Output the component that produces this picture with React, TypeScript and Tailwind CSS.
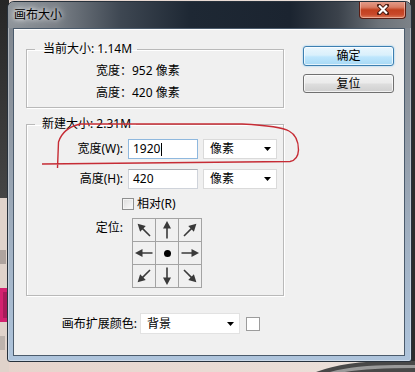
import React from "react";

const FONT = "font-['Noto_Sans','Noto_Sans_CJK_SC',sans-serif]";

function Arrow({ angle }: { angle: number }) {
  return (
    <svg width="22" height="22" viewBox="0 0 22 22">
      <g transform={`rotate(${angle} 11 11)`}>
        <line x1="11" y1="19.5" x2="11" y2="8" stroke="#3a3a3a" strokeWidth="1.6" />
        <polygon points="11,2 7,9.5 15,9.5" fill="#3a3a3a" />
      </g>
    </svg>
  );
}

function Cell({ children }: { children?: React.ReactNode }) {
  return <div className="flex h-[22px] w-[22px] items-center justify-center bg-[#f0f0f0]">{children}</div>;
}

function Caret() {
  return (
    <svg width="7" height="4" viewBox="0 0 7 4">
      <polygon points="0,0 7,0 3.5,4" fill="#000" />
    </svg>
  );
}

function Wallpaper() {
  return (
    <svg className="absolute inset-0" width="415" height="372" viewBox="0 0 415 372">
      <defs>
        <linearGradient id="leftdark" x1="0" y1="0" x2="0" y2="1">
          <stop offset="0" stopColor="#262626" />
          <stop offset="1" stopColor="#454545" />
        </linearGradient>
        <linearGradient id="bottom" x1="0" y1="0" x2="1" y2="0">
          <stop offset="0" stopColor="#e6d4cc" />
          <stop offset="1" stopColor="#ece2dc" />
        </linearGradient>
      </defs>
      <rect x="0" y="0" width="415" height="372" fill="url(#bottom)" />
      <rect x="0" y="0" width="9" height="198" fill="url(#leftdark)" />
      <rect x="0" y="198" width="9" height="174" fill="#e0d3cb" />
      <rect x="0" y="250" width="6" height="14" fill="#8c8480" opacity="0.6" />
      <rect x="0" y="288" width="7" height="34" fill="#d3226f" />
      <rect x="3" y="292" width="4" height="26" fill="#a81b5a" />
      <rect x="0" y="336" width="5" height="14" fill="#9a9490" opacity="0.5" />
      <rect x="410" y="0" width="5" height="372" fill="#2c2c2c" />
      <path d="M316,372 Q345,361 392,361 L415,361 L415,372 Z" fill="#484848" />
      <path d="M330,372 Q355,365 395,365 L415,365 L415,368 Q370,368 345,372 Z" fill="#9a9a9a" />
    </svg>
  );
}

function Annotation() {
  return (
    <svg className="pointer-events-none absolute inset-0" width="415" height="372" viewBox="0 0 415 372">
      <path
        d="M42,164 L290,161.5 Q298,160 298.5,150 Q298.5,136 289,131 Q281,126 242,124 L80,124 Q63,128 58.5,142 L57.5,168"
        fill="none"
        stroke="#c62c35"
        strokeWidth="1.4"
      />
    </svg>
  );
}

export default function App() {
  return (
    <div className={`relative h-[372px] w-[415px] overflow-hidden text-[12px] text-black ${FONT}`}>
      <Wallpaper />
      <div className="relative ml-[7px] pt-[1px]">
        <div className="flex h-[361px] w-[405px] flex-col overflow-hidden rounded-t-[7px] rounded-b-[3px] border border-[#27313c] bg-[linear-gradient(180deg,#7d848c_0%,#8d959f_30%,#a3b3c5_70%,#aec4dc_100%)] shadow-[inset_0_0_0_1px_rgba(255,255,255,0.35)]">
          {/* title bar */}
          <div className="flex h-[26px] shrink-0 items-start justify-between bg-[linear-gradient(90deg,#8f959b_0%,#7a8087_12%,#3e4752_28%,#1e2834_45%,#1b2430_70%,#3b424b_82%,#6c7279_92%,#7d8288_100%)] pl-[6px] pr-[5px]">
            <div className="pt-[6px] leading-[14px] text-black [text-shadow:0_0_5px_#fff,0_0_8px_rgba(255,255,255,0.9)]">
              画布大小
            </div>
            <div className="-mt-[2px] flex h-[19px] w-[47px] items-center justify-center rounded-b-[4px] border border-t-0 border-[#5a1c12] bg-[linear-gradient(180deg,#e6a797_0%,#d97c63_40%,#c2401f_55%,#c8482a_80%,#da7a58_100%)] shadow-[inset_0_0_0_1px_rgba(255,220,210,0.5)]">
              <svg width="12" height="11" viewBox="0 0 12 11">
                <path d="M2,1.5 L10,9.5 M10,1.5 L2,9.5" stroke="#4a1a10" strokeWidth="4" strokeLinecap="square" />
                <path d="M2,1.5 L10,9.5 M10,1.5 L2,9.5" stroke="#fff" strokeWidth="2.2" />
              </svg>
            </div>
          </div>
          {/* client area */}
          <div className="mb-[5px] ml-[5px] mr-[6px] flex flex-1 border border-[#4b5b6c] bg-[#f0f0f0] shadow-[inset_0_1px_0_#fff]">
            {/* left column */}
            <div className="flex w-[270px] flex-col pl-[12px] pt-[13px]">
              <fieldset className="w-[258px] border border-[#b9b9b9] pb-[3px] shadow-[1px_1px_0_#fff,inset_1px_1px_0_#fff]">
                <legend className="ml-[8px] pl-[8px] pr-[5px] leading-[14px]">当前大小: 1.14M</legend>
                <div className="flex flex-col pl-[69px] pt-[4px] leading-[22px]">
                  <div>宽度：952 像素</div>
                  <div>高度：420 像素</div>
                </div>
              </fieldset>

              <fieldset className="mt-[9px] w-[258px] border border-[#b9b9b9] pb-[7px] shadow-[1px_1px_0_#fff,inset_1px_1px_0_#fff]">
                <legend className="ml-[8px] pl-[7px] pr-[5px] leading-[14px]">新建大小: 2.31M</legend>
                <div className="flex flex-col pt-[8px]">
                  <div className="flex h-[20px] items-center">
                    <div className="w-[97px] pr-px text-right leading-[14px]">宽度(W):</div>
                    <div className="ml-[4px] flex h-[20px] w-[70px] items-center border border-[#8fb8de] bg-white pl-[4px] leading-[14px]">
                      1920
                      <span className="ml-[1px] inline-block h-[13px] w-px bg-black" />
                    </div>
                    <div className="ml-[5px] flex h-[20px] w-[74px] items-center justify-between border border-[#dadada] bg-white pl-[6px] pr-[5px] leading-[14px]">
                      <span>像素</span>
                      <Caret />
                    </div>
                  </div>
                  <div className="mt-[10px] flex h-[20px] items-center">
                    <div className="w-[97px] pr-px text-right leading-[14px]">高度(H):</div>
                    <div className="ml-[4px] flex h-[20px] w-[70px] items-center border border-[#cfd3da] border-t-[#abadb3] bg-white pl-[4px] leading-[14px]">
                      420
                    </div>
                    <div className="ml-[5px] flex h-[20px] w-[74px] items-center justify-between border border-[#dadada] bg-white pl-[6px] pr-[5px] leading-[14px]">
                      <span>像素</span>
                      <Caret />
                    </div>
                  </div>
                  <div className="mt-[8px] flex h-[13px] items-center pl-[95px]">
                    <div className="h-[12px] w-[12px] border border-[#8e8f8f] bg-[linear-gradient(135deg,#dcdcdc,#fbfbfb)] shadow-[inset_0_0_0_1px_#f4f4f4]" />
                    <span className="ml-[3px] leading-[14px]">相对(R)</span>
                  </div>
                  <div className="mt-[8px] flex items-start">
                    <div className="mt-[3px] w-[96px] text-right leading-[14px]">定位:</div>
                    <div className="ml-[9px] grid grid-cols-3 gap-px border border-[#a3a3a3] bg-[#a3a3a3]">
                      <Cell><Arrow angle={315} /></Cell>
                      <Cell><Arrow angle={0} /></Cell>
                      <Cell><Arrow angle={45} /></Cell>
                      <Cell><Arrow angle={270} /></Cell>
                      <Cell>
                        <div className="h-[7px] w-[7px] rounded-full bg-black" />
                      </Cell>
                      <Cell><Arrow angle={90} /></Cell>
                      <Cell><Arrow angle={225} /></Cell>
                      <Cell><Arrow angle={180} /></Cell>
                      <Cell><Arrow angle={135} /></Cell>
                    </div>
                  </div>
                </div>
              </fieldset>

              <div className="mt-[17px] flex h-[21px] items-center">
                <div className="w-[111px] text-right leading-[14px]">画布扩展颜色:</div>
                <div className="ml-[3px] flex h-[21px] w-[100px] items-center justify-between border border-[#e2e2e2] bg-white pl-[6px] pr-[5px] leading-[14px]">
                  <span>背景</span>
                  <Caret />
                </div>
                <div className="ml-[6px] h-[14px] w-[14px] border border-[#9c9c9c] bg-white" />
              </div>
            </div>

            {/* right column */}
            <div className="ml-[19px] flex flex-col pt-[17px]">
              <button className="flex h-[20px] w-[91px] items-center justify-center rounded-[3px] border border-[#3c7fb1] bg-[linear-gradient(180deg,#eaf6fd_0%,#d9f0fc_45%,#bee6fd_55%,#a7d9f5_100%)] leading-[14px] shadow-[inset_0_0_0_1px_rgba(255,255,255,0.7),0_0_2px_#7cc3ee]">
                确定
              </button>
              <button className="mt-[8px] flex h-[19px] w-[91px] items-center justify-center rounded-[3px] border border-[#707070] bg-[linear-gradient(180deg,#f2f2f2_0%,#ebebeb_45%,#dddddd_55%,#cfcfcf_100%)] leading-[14px] shadow-[inset_0_0_0_1px_rgba(255,255,255,0.7)]">
                复位
              </button>
            </div>
          </div>
        </div>
      </div>
      <Annotation />
    </div>
  );
}
